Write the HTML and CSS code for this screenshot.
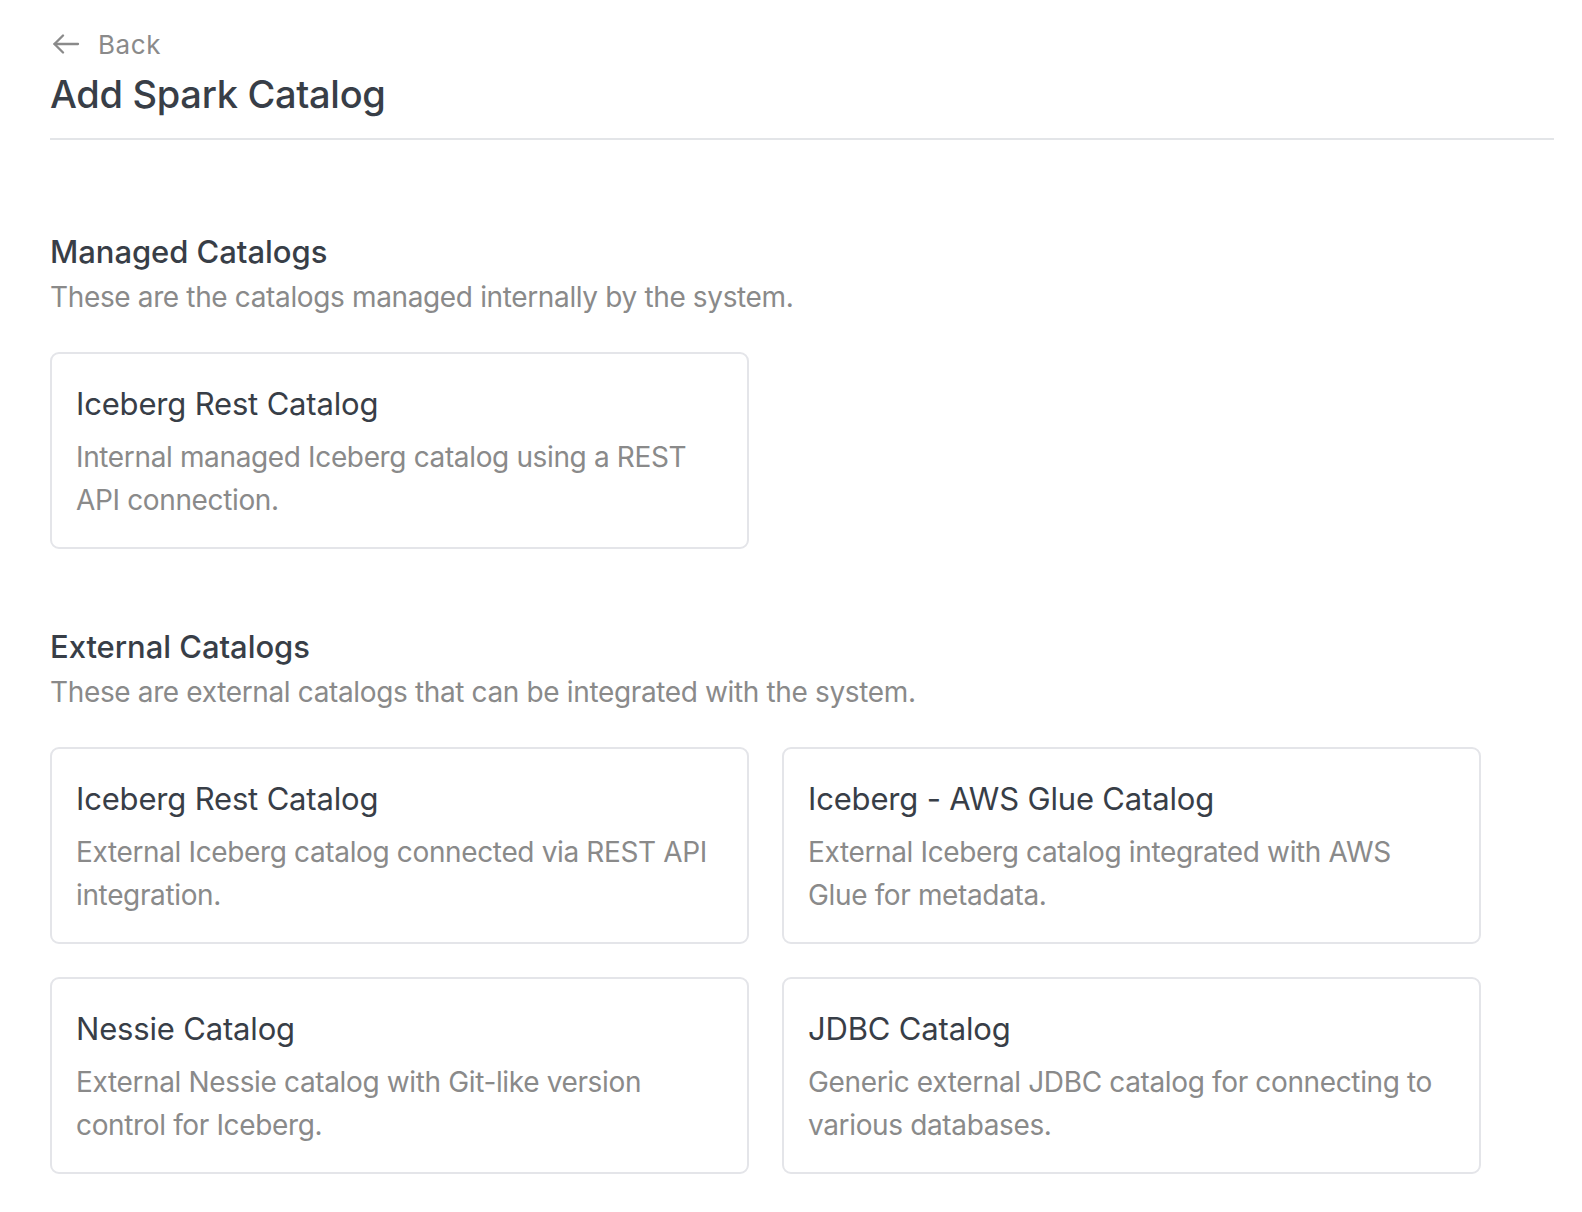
FILE: index.html
```html
<!DOCTYPE html>
<html lang="en">
<head>
<meta charset="utf-8">
<title>Add Spark Catalog</title>
<link rel="stylesheet" href="styles.css">
</head>
<body>
<div class="page">
  <header class="page-header">
    <a class="back-link" href="#">
      <svg class="back-icon" width="28" height="20" viewBox="0 0 28 20" fill="none" stroke="currentColor" stroke-width="2.3" stroke-linecap="round" stroke-linejoin="round"><path d="M26 10H2.5"/><path d="M11 1.5L2.5 10l8.5 8.5"/></svg>
      <span>Back</span>
    </a>
    <h1 class="page-title">Add Spark Catalog</h1>
  </header>

  <section class="section section-managed">
    <h2 class="section-title">Managed Catalogs</h2>
    <p class="section-sub">These are the catalogs managed internally by the system.</p>
    <div class="card-grid">
      <div class="card">
        <h3 class="card-title">Iceberg Rest Catalog</h3>
        <p class="card-desc">Internal managed Iceberg catalog using a REST API connection.</p>
      </div>
    </div>
  </section>

  <section class="section section-external">
    <h2 class="section-title">External Catalogs</h2>
    <p class="section-sub">These are external catalogs that can be integrated with the system.</p>
    <div class="card-grid">
      <div class="card">
        <h3 class="card-title">Iceberg Rest Catalog</h3>
        <p class="card-desc">External Iceberg catalog connected via REST API integration.</p>
      </div>
      <div class="card">
        <h3 class="card-title">Iceberg - AWS Glue Catalog</h3>
        <p class="card-desc">External Iceberg catalog integrated with AWS Glue for metadata.</p>
      </div>
      <div class="card">
        <h3 class="card-title">Nessie Catalog</h3>
        <p class="card-desc">External Nessie catalog with Git-like version control for Iceberg.</p>
      </div>
      <div class="card">
        <h3 class="card-title">JDBC Catalog</h3>
        <p class="card-desc">Generic external JDBC catalog for connecting to various databases.</p>
      </div>
    </div>
  </section>
</div>
</body>
</html>
```

FILE: styles.css
```css
* { box-sizing: border-box; }

html, body {
  margin: 0;
  padding: 0;
  background: #ffffff;
}

body {
  font-family: Inter, "Noto Sans", "Liberation Sans", sans-serif;
  color: #374151;
}

.page {
  padding: 24px 28px 40px 50px;
}

.page-header {
  border-bottom: 2px solid #e3e5e8;
  padding-bottom: 20px;
}

.back-link {
  display: flex;
  align-items: center;
  gap: 18px;
  height: 40px;
  font-size: 26px;
  letter-spacing: 0.6px;
  color: #8a8a8a;
  text-decoration: none;
}

.back-icon {
  display: block;
  margin-left: 2px;
  color: #8a8a8a;
}

.page-title {
  margin: 6px 0 0 0;
  font-size: 38px;
  line-height: 48px;
  font-weight: 500;
  letter-spacing: -0.3px;
  color: #383e47;
}

.section-title {
  margin: 0;
  font-size: 31px;
  line-height: 40px;
  font-weight: 500;
  letter-spacing: -0.05px;
  color: #383e47;
}

.section-sub {
  margin: 5px 0 0 0;
  font-size: 28px;
  line-height: 40px;
  letter-spacing: -0.36px;
  color: #8a8a8a;
}

.section-managed {
  margin-top: 92px;
}

.section-external {
  margin-top: 78px;
}

.card-grid {
  margin-top: 35px;
  display: grid;
  grid-template-columns: 699px 699px;
  column-gap: 33px;
  row-gap: 33px;
}

.card {
  border: 2px solid #e4e5e9;
  border-radius: 9px;
  padding: 30px 24px 0 24px;
  height: 197px;
}

.card-title {
  margin: 0;
  font-size: 31px;
  line-height: 40px;
  font-weight: 400;
  letter-spacing: -0.17px;
  color: #383e47;
}

.card-desc {
  margin: 12px 0 0 0;
  font-size: 28px;
  line-height: 43.4px;
  letter-spacing: -0.36px;
  color: #8a8a8a;
}
```
